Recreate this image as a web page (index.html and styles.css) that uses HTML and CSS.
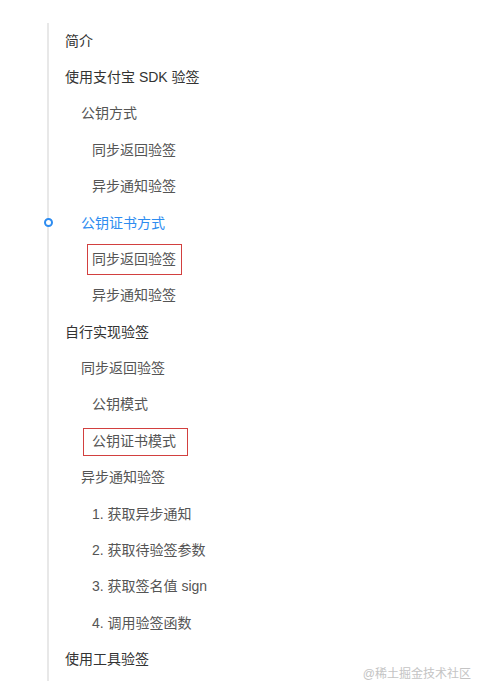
FILE: index.html
```html
<!DOCTYPE html>
<html lang="zh-CN">
<head>
<meta charset="UTF-8">
<meta name="viewport" content="width=device-width, initial-scale=1.0">
<title>目录</title>
<link rel="stylesheet" href="styles.css">
</head>
<body>

<nav class="catalog">
    <ul class="catalog-list">
        <li class="item d1">简介</li>
        <li class="item d1">使用支付宝 SDK 验签</li>
        <li class="item d2">公钥方式</li>
        <li class="item d3">同步返回验签</li>
        <li class="item d3">异步通知验签</li>
        <li class="item d2 active">公钥证书方式</li>
        <li class="item d3"><span class="mark mark-a">同步返回验签</span></li>
        <li class="item d3">异步通知验签</li>
        <li class="item d1">自行实现验签</li>
        <li class="item d2">同步返回验签</li>
        <li class="item d3">公钥模式</li>
        <li class="item d3"><span class="mark mark-b">公钥证书模式</span></li>
        <li class="item d2">异步通知验签</li>
        <li class="item d3">1. 获取异步通知</li>
        <li class="item d3">2. 获取待验签参数</li>
        <li class="item d3">3. 获取签名值 sign</li>
        <li class="item d3">4. 调用验签函数</li>
        <li class="item d1">使用工具验签</li>
    </ul>
</nav>

<div class="watermark">@稀土掘金技术社区</div>

</body>
</html>
```

FILE: styles.css
```css
body {
    margin: 0;
    background-color: #ffffff;
    font-family: "Liberation Sans", "Noto Sans CJK SC", sans-serif;
    width: 485px;
    height: 695px;
    position: relative;
    overflow: hidden;
}

.catalog {
    margin: 26px 0 0 47px;
    height: 658px;
    border-left: 2px solid #e8e8e8;
}

.catalog-list {
    list-style: none;
    margin: -3.5px 0 0 0;
    padding: 0;
}

.item {
    position: relative;
    font-size: 14px;
    line-height: 22px;
    padding: 7.2px 0;
    white-space: nowrap;
}

.d1 {
    padding-left: 16px;
    color: #333333;
}

.d2 {
    padding-left: 32px;
    color: #555555;
}

.d3 {
    padding-left: 43px;
    color: #555555;
}

.active {
    color: #2d8cf0;
}

/* little ring on the rail for the current heading */
.active::before {
    content: "";
    position: absolute;
    left: -5.5px;
    top: 13.5px;
    width: 5px;
    height: 5px;
    border: 2px solid #2d8cf0;
    border-radius: 50%;
    background-color: #ffffff;
}

.mark {
    position: relative;
}

.mark::after {
    content: "";
    position: absolute;
    border: 1px solid #d2403f;
}

.mark-a::after {
    left: -5px;
    right: -6px;
    top: -7px;
    bottom: -8px;
}

.mark-b::after {
    left: -9px;
    right: -12px;
    top: -5px;
    bottom: -7px;
}

.watermark {
    position: absolute;
    right: 14px;
    bottom: 14px;
    font-size: 12px;
    color: #c4c4c4;
}
```
